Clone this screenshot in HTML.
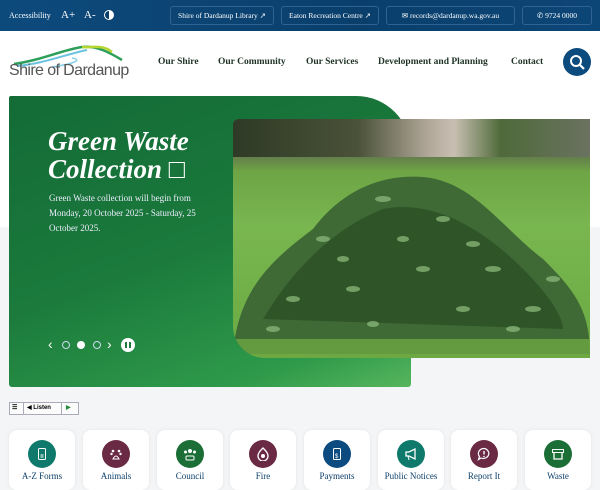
<!DOCTYPE html>
<html><head><meta charset="utf-8">
<style>
*{box-sizing:border-box;margin:0;padding:0}
body{width:600px;height:480px;overflow:hidden;font-family:"Liberation Serif",serif;background:#f4f5f6;position:relative}
.top{position:absolute;left:0;top:0;width:600px;height:31px;background:linear-gradient(90deg,#0d4a7c,#0a3f6c 60%,#0c4677);color:#fff}
.top .acc{position:absolute;left:9px;top:11px;font-size:8px}
.top .ap{position:absolute;top:9px;font-size:11px}
.pill{position:absolute;top:6px;height:19px;border:1px solid #2f6393;border-radius:3px;font-size:7.5px;color:#fff;display:flex;align-items:center;justify-content:center;gap:4px}
.hdr{position:absolute;left:0;top:31px;width:600px;height:65px;background:#fff}
.nav{position:absolute;top:57px;font-size:9.5px;font-weight:bold;color:#1e3326}
.search{position:absolute;left:563px;top:48px;width:28px;height:28px;border-radius:50%;background:#0c4b7e}
.white2{position:absolute;left:0;top:96px;width:600px;height:131px;background:#fff}
.hero{position:absolute;left:9px;top:96px;width:402px;height:291px;border-radius:2px 55px 3px 3px;background:linear-gradient(160deg,#136b36 0%,#1b7a3c 50%,#2e9a4a 85%,#57b55d 100%)}
.h1{position:absolute;left:48px;top:127px;font-size:27px;line-height:28px;font-weight:bold;font-style:italic;color:#fff;white-space:nowrap}
.p{position:absolute;left:49px;top:191px;font-size:9px;line-height:15px;color:#eef;white-space:nowrap}
.photo{position:absolute;left:233px;top:119px;width:357px;height:239px;border-radius:6px 0 0 32px;overflow:hidden;
background:linear-gradient(180deg,#3a4430 0%,#5d6650 12%,#6ea545 22%,#79b650 45%,#6aaa42 100%)}
.lst{position:absolute;left:9px;top:402px;width:70px;height:13px;border:1px solid #aab;background:#fbfbfb;font-family:"Liberation Sans",sans-serif;font-size:6px;font-weight:bold}
.card{position:absolute;top:430px;width:66px;height:60px;background:#fff;border-radius:8px;box-shadow:0 0 3px rgba(0,0,0,.08)}
.card .c{position:absolute;left:19px;top:10px;width:28px;height:28px;border-radius:50%}
.card .c svg{position:absolute;left:7px;top:7px}
.card .t{position:absolute;left:0;width:100%;top:41px;text-align:center;font-size:9px;color:#0d3f6a}
</style></head><body>
<div class="top">
<div class="acc">Accessibility</div>
<div class="ap" style="left:61px">A+</div>
<div class="ap" style="left:84px">A-</div>
<div style="position:absolute;left:104px;top:10px;width:10px;height:10px;border-radius:50%;border:1.5px solid #fff;background:linear-gradient(90deg,#0a3f6c 50%,#fff 50%)"></div>
<div class="pill" style="left:170px;width:104px">Shire of Dardanup Library ↗</div>
<div class="pill" style="left:281px;width:98px">Eaton Recreation Centre ↗</div>
<div class="pill" style="left:386px;width:129px">✉ records@dardanup.wa.gov.au</div>
<div class="pill" style="left:522px;width:70px">✆ 9724 0000</div>
</div>
<div class="hdr">
<svg style="position:absolute;left:12px;top:13px" width="115" height="24" viewBox="0 0 115 24"><path d="M2 20 C30 16 50 6 70 3 C85 1 100 10 110 16" stroke="#2e9f5b" stroke-width="2.5" fill="none"/><path d="M5 22 C30 20 55 10 75 6" stroke="#6cc3e0" stroke-width="2" fill="none"/><path d="M70 3 C80 4 90 0 100 8" stroke="#b5d531" stroke-width="2.5" fill="none"/><path d="M40 23 C60 20 72 16 60 14" stroke="#8ad0ea" stroke-width="1.5" fill="none"/></svg>
<div style="position:absolute;left:9px;top:31px;font-family:'Liberation Sans',sans-serif;font-size:16px;color:#555;letter-spacing:-0.6px">Shire of Dardanup</div>
</div>
<div class="nav" style="left:158px">Our Shire</div>
<div class="nav" style="left:218px">Our Community</div>
<div class="nav" style="left:306px">Our Services</div>
<div class="nav" style="left:378px">Development and Planning</div>
<div class="nav" style="left:511px">Contact</div>
<div class="search"><svg width="28" height="28"><circle cx="13" cy="13" r="5" stroke="#fff" stroke-width="2" fill="none"/><path d="M17 17l4 4" stroke="#fff" stroke-width="2.2"/></svg></div>
<div class="white2"></div>
<div class="hero"></div>
<div class="h1">Green Waste<br>Collection □</div>
<div class="p">Green Waste collection will begin from<br>Monday, 20 October 2025 - Saturday, 25<br>October 2025.</div>
<div style="position:absolute;left:48px;top:336px;color:#fff;font-size:14px;font-family:'Liberation Sans',sans-serif">‹</div>
<div style="position:absolute;left:62px;top:341px;width:8px;height:8px;border:1px solid #cde;border-radius:50%"></div>
<div style="position:absolute;left:77px;top:341px;width:8px;height:8px;background:#fff;border-radius:50%"></div>
<div style="position:absolute;left:93px;top:341px;width:8px;height:8px;border:1px solid #cde;border-radius:50%"></div>
<div style="position:absolute;left:107px;top:336px;color:#fff;font-size:14px;font-family:'Liberation Sans',sans-serif">›</div>
<div style="position:absolute;left:121px;top:338px;width:14px;height:14px;background:#fff;border-radius:50%"><div style="position:absolute;left:4px;top:4px;width:2px;height:6px;background:#1b7a3c"></div><div style="position:absolute;left:8px;top:4px;width:2px;height:6px;background:#1b7a3c"></div></div>
<div class="photo">
<div style="position:absolute;left:0;top:0;width:100%;height:38px;background:linear-gradient(90deg,#2e3a26,#4a5238 35%,#b2a89a 55%,#c8bfb2 62%,#4f6a3a 75%,#6a7260)"></div>
<svg style="position:absolute;left:0;top:0" width="357" height="239">
<path d="M0 235 C5 170 40 140 80 110 C110 70 150 55 190 58 C240 62 270 110 310 140 C340 170 357 190 357 235 Z" fill="#3f6a35"/>
<path d="M30 200 C60 150 100 110 150 90 C200 80 250 110 290 150 C320 180 330 200 330 210 Z" fill="#2f5428"/>
<g fill="#8ab879" opacity=".75">
<ellipse cx="90" cy="120" rx="7" ry="3"/><ellipse cx="150" cy="80" rx="8" ry="3"/><ellipse cx="210" cy="100" rx="7" ry="3"/><ellipse cx="260" cy="150" rx="8" ry="3"/><ellipse cx="120" cy="170" rx="7" ry="3"/><ellipse cx="300" cy="190" rx="8" ry="3"/><ellipse cx="60" cy="180" rx="7" ry="3"/><ellipse cx="190" cy="150" rx="7" ry="3"/>
<ellipse cx="170" cy="120" rx="6" ry="3"/><ellipse cx="240" cy="125" rx="7" ry="3"/><ellipse cx="110" cy="140" rx="6" ry="3"/><ellipse cx="320" cy="160" rx="7" ry="3"/><ellipse cx="40" cy="210" rx="7" ry="3"/><ellipse cx="230" cy="190" rx="7" ry="3"/><ellipse cx="140" cy="205" rx="6" ry="3"/><ellipse cx="280" cy="210" rx="7" ry="3"/>
</g>
<rect x="0" y="220" width="357" height="19" fill="#6ea843" opacity=".8"/>
</svg></div>
<div class="lst"><span style="position:absolute;left:2px;top:1px">☰</span><span style="position:absolute;left:13px;top:0;height:11px;border-left:1px solid #aab;padding-left:3px;line-height:11px">◀ Listen</span><span style="position:absolute;left:51px;top:0;height:11px;border-left:1px solid #aab;padding-left:4px;line-height:11px;color:#2a8a3a">▶</span></div>
<div class="card" style="left:9px"><div class="c" style="background:#0f7a6c"><svg width="14" height="14"><rect x="3.5" y="1.5" width="7" height="11" rx="1" stroke="#fff" fill="none"/><path d="M5.5 8h3M5.5 10h3" stroke="#fff"/></svg></div><div class="t">A-Z Forms</div></div>
<div class="card" style="left:83px"><div class="c" style="background:#6b2a43"><svg width="14" height="14"><circle cx="4" cy="4" r="1.3" fill="#fff"/><circle cx="10" cy="4" r="1.3" fill="#fff"/><circle cx="2.5" cy="7" r="1.2" fill="#fff"/><circle cx="11.5" cy="7" r="1.2" fill="#fff"/><path d="M4 12 Q7 6 10 12 Z" stroke="#fff" fill="none"/></svg></div><div class="t">Animals</div></div>
<div class="card" style="left:157px"><div class="c" style="background:#1b6e36"><svg width="14" height="14"><circle cx="7" cy="4" r="2" fill="#fff"/><circle cx="2.5" cy="5" r="1.5" fill="#fff"/><circle cx="11.5" cy="5" r="1.5" fill="#fff"/><rect x="3" y="9" width="8" height="4" rx="1" stroke="#fff" fill="none"/></svg></div><div class="t">Council</div></div>
<div class="card" style="left:230px"><div class="c" style="background:#6b2a43"><svg width="14" height="14"><path d="M7 1 C10 4 12 6 12 9 A5 5 0 0 1 2 9 C2 6 4 4 7 1Z" stroke="#fff" fill="none" stroke-width="1.3"/><circle cx="7" cy="9" r="2" fill="#fff"/></svg></div><div class="t">Fire</div></div>
<div class="card" style="left:304px"><div class="c" style="background:#0b4b80"><svg width="14" height="14"><rect x="3.5" y="1.5" width="7" height="11" rx="1" stroke="#fff" fill="none"/><text x="5" y="11" font-size="6" fill="#fff" font-family="Liberation Sans">$</text></svg></div><div class="t">Payments</div></div>
<div class="card" style="left:378px"><div class="c" style="background:#0f7a6c"><svg width="14" height="14"><path d="M2 5h3l6-3v10l-6-3H2z" stroke="#fff" fill="none" stroke-width="1.3"/><path d="M4 9l1 4" stroke="#fff"/></svg></div><div class="t">Public Notices</div></div>
<div class="card" style="left:451px"><div class="c" style="background:#6b2a43"><svg width="14" height="14"><path d="M7 1.5A5.5 5 0 1 1 4 11L1.5 12.5 2.5 9.5A5.5 5 0 0 1 7 1.5Z" stroke="#fff" fill="none" stroke-width="1.2"/><path d="M7 4v3.5" stroke="#fff" stroke-width="1.4"/><circle cx="7" cy="9.5" r=".8" fill="#fff"/></svg></div><div class="t">Report It</div></div>
<div class="card" style="left:525px"><div class="c" style="background:#1b6e36"><svg width="14" height="14"><rect x="1.5" y="2.5" width="11" height="3" stroke="#fff" fill="none"/><path d="M3 6v6h8V6" stroke="#fff" fill="none" stroke-width="1.3"/></svg></div><div class="t">Waste</div></div>
</body></html>
